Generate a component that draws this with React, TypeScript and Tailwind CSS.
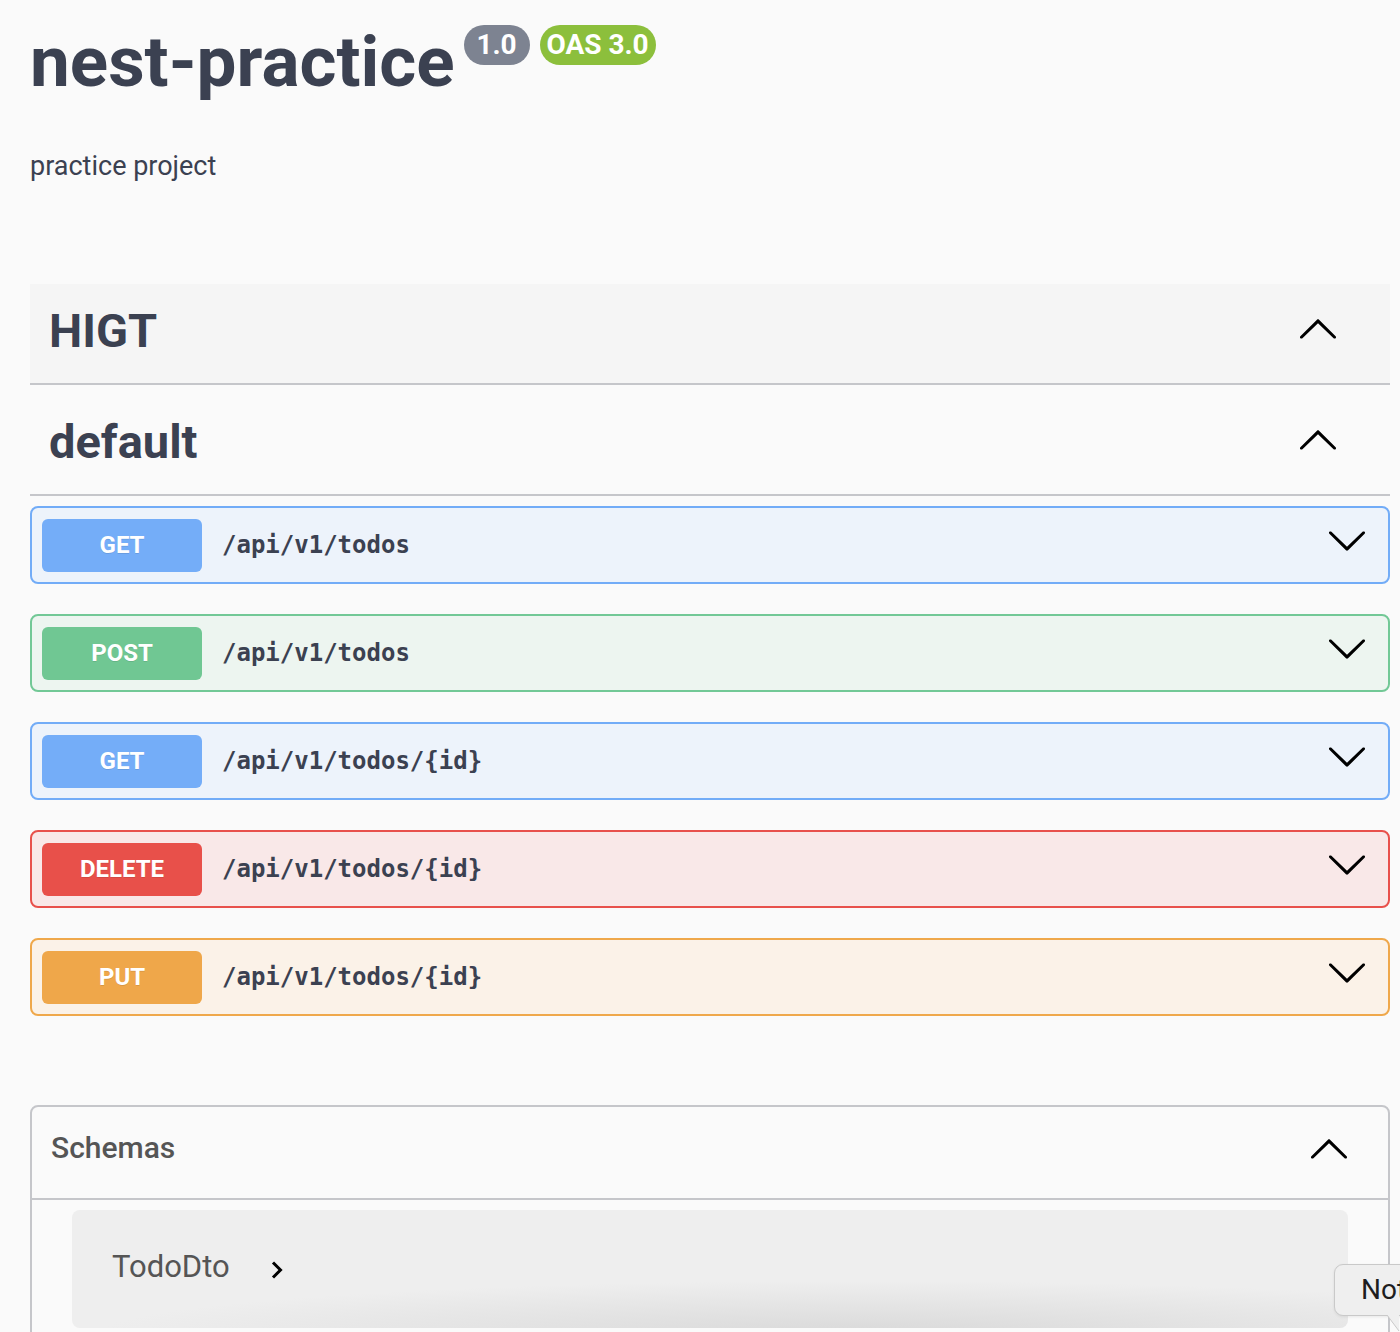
import React from "react";

const ops = [
  { method: "GET", path: "/api/v1/todos", border: "border-[#72acf7]", bg: "bg-[#edf3fb]", badge: "bg-[#74adf8]" },
  { method: "POST", path: "/api/v1/todos", border: "border-[#72c896]", bg: "bg-[#edf5f0]", badge: "bg-[#70c793]" },
  { method: "GET", path: "/api/v1/todos/{id}", border: "border-[#72acf7]", bg: "bg-[#edf3fb]", badge: "bg-[#74adf8]" },
  { method: "DELETE", path: "/api/v1/todos/{id}", border: "border-[#e8514c]", bg: "bg-[#f9e8e8]", badge: "bg-[#e8504a]" },
  { method: "PUT", path: "/api/v1/todos/{id}", border: "border-[#efa84b]", bg: "bg-[#fbf2e8]", badge: "bg-[#efa74a]" },
];

function Arrow({ up, className = "" }: { up?: boolean; className?: string }) {
  return (
    <svg
      width="42"
      height="42"
      viewBox="0 0 20 20"
      className={`${up ? "rotate-180" : ""} ${className}`}
      fill="#000"
    >
      <path d="M17.418 6.109c.272-.268.709-.268.979 0s.271.701 0 .969l-7.908 7.83c-.27.268-.707.268-.979 0l-7.908-7.83c-.27-.268-.27-.701 0-.969.271-.268.709-.268.979 0L10 13.25l7.418-7.141z" />
    </svg>
  );
}

function Tag({ name, hover }: { name: string; hover?: boolean }) {
  return (
    <div
      className={`mb-[10px] flex h-[101px] items-center justify-between border-b-2 border-[#c5c6ca] pb-[7px] pl-[19px] pr-[51px] ${
        hover ? "bg-[#f5f5f5]" : ""
      }`}
    >
      <h3 className="text-[47px] font-bold leading-none">{name}</h3>
      <Arrow up />
    </div>
  );
}

export default function App() {
  return (
    <div className="relative h-[1332px] w-full overflow-hidden bg-[#fafafa] font-['Roboto',sans-serif] text-[#3b4151]">
      <div className="pl-[30px] pr-[10px]">
        {/* info */}
        <div className="flex items-start gap-[9px] pt-[26px]">
          <h2 className="text-[71px] font-bold leading-[72px]">nest-practice</h2>
          <div className="-mt-[1px] flex gap-[10px]">
            <span className="flex h-[40px] w-[66px] items-center justify-center rounded-full bg-[#7d8391] text-[28px] font-bold text-white">
              1.0
            </span>
            <span className="flex h-[40px] w-[116px] items-center justify-center rounded-full bg-[#8cbf3c] text-[28px] font-bold text-white">
              OAS 3.0
            </span>
          </div>
        </div>
        <p className="mt-[52px] text-[27px] leading-[32px]">practice project</p>

        {/* tags */}
        <div className="mt-[102px]">
          <Tag name="HIGT" hover />
          <Tag name="default" />
          <div className="flex flex-col gap-[30px]">
            {ops.map((op, i) => (
              <div
                key={i}
                className={`flex h-[78px] items-center rounded-[8px] border-2 pl-[10px] pr-[20px] ${op.border} ${op.bg}`}
              >
                <span
                  className={`flex h-[53px] w-[160px] items-center justify-center rounded-[6px] text-[24px] font-bold text-white [text-shadow:0_1px_0_rgba(0,0,0,0.1)] ${op.badge}`}
                >
                  {op.method}
                </span>
                <span className="ml-[20px] font-['DejaVu_Sans_Mono',monospace] text-[24px] font-bold">
                  {op.path}
                </span>
                <Arrow className="mb-[10px] ml-auto" />
              </div>
            ))}
          </div>
        </div>

        {/* schemas */}
        <section className="mt-[89px] h-[300px] rounded-[8px] border-2 border-[#c5c6ca]">
          <div className="flex h-[93px] items-center justify-between border-b-2 border-[#c5c6ca] pb-[10px] pl-[19px] pr-[38px]">
            <h4 className="text-[30px] font-medium leading-none text-[#555]">Schemas</h4>
            <Arrow up className="mt-[4px]" />
          </div>
          <div className="mx-[40px] mt-[10px] flex h-[118px] items-center rounded-[8px] bg-[#eeeeee] bg-[radial-gradient(ellipse_60%_45%_at_62%_105%,#d9d9d9,#eeeeee)] pb-[6px] pl-[40px]">
            <span className="text-[31px] leading-none text-[#555]">TodoDto</span>
            <svg width="18" height="20" viewBox="0 0 18 20" className="ml-[38px] mt-[8px]">
              <path d="M5 2.5 L12.5 10 L5 17.5" fill="none" stroke="#000" strokeWidth="3" />
            </svg>
          </div>
        </section>
      </div>

      {/* tooltip */}
      <div className="absolute left-[1334px] top-[1264px] flex h-[52px] w-[120px] items-center rounded-[9px] border border-[#c9c9c9] bg-[#efefef] pl-[26px] shadow-[0_1px_3px_rgba(0,0,0,0.08)]">
        <span className="text-[28px] leading-none text-[#1e1e1e]">Not</span>
        <svg width="14" height="18" viewBox="0 0 14 18" className="absolute left-[52px] top-[50px]">
          <path d="M0 0 L12 16 L12 0 Z" fill="#efefef" />
          <path d="M0 0 L12 16" fill="none" stroke="#c9c9c9" strokeWidth="1" />
        </svg>
      </div>
    </div>
  );
}
